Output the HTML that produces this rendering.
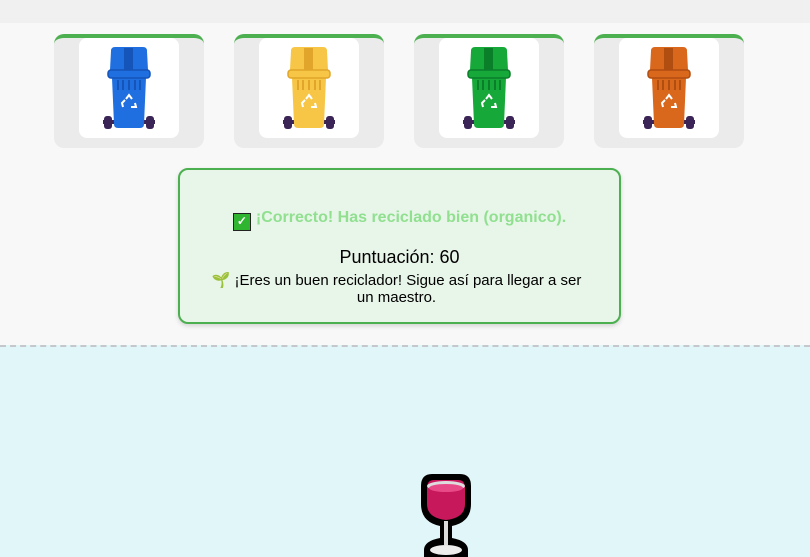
<!DOCTYPE html>
<html><head><meta charset="utf-8"><style>
*{margin:0;padding:0;box-sizing:border-box}
body{width:810px;height:557px;overflow:hidden;background:#f8f8f8;font-family:"Liberation Sans",Arial,sans-serif;position:relative}
.top{position:absolute;left:0;top:0;width:810px;height:23px;background:#f0f0f0}
.card{position:absolute;top:34px;width:150px;height:114px;background:#ebebeb;border-radius:10px;border-top:4px solid #4caf50}
.inner{position:absolute;left:25px;top:0px;width:100px;height:100px;background:#fff;border-radius:8px}
.fb{position:absolute;left:178px;top:168px;width:443px;height:156px;background:#e8f5e9;border:2px solid #4caf50;border-radius:10px;box-shadow:0 2px 5px rgba(0,0,0,.15);text-align:center}
.l1{position:absolute;top:39px;width:100%;font-size:16px;font-weight:bold;color:#90e090}
.l2{position:absolute;top:77px;width:100%;font-size:18px;color:#000}
.l3{position:absolute;top:102px;left:22px;right:28px;font-size:15px;line-height:17px;color:#000}
.bottom{position:absolute;left:0;top:345px;width:810px;height:212px;background:#e0f6f9;border-top:2px dashed #c4c8cc}
.ck{display:inline-block;width:18px;height:18px;background:#2fb52f;border:1.5px solid #222;vertical-align:-3px;color:#fff;font-size:12px;line-height:15px;margin-right:5px}
</style></head><body>
<div class="top"></div>
<svg width="0" height="0" style="position:absolute"><defs>
<g id="bin">
<rect x="25" y="78" width="8" height="13" rx="3" fill="#3b2456"/>
<rect x="67" y="78" width="8" height="13" rx="3" fill="#3b2456"/>
<rect x="24" y="82" width="52" height="4" fill="#3b2456"/>
<path d="M33 40 L67 40 L65 86 Q65 90 61 90 L39 90 Q35 90 35 86 Z" fill="var(--c)"/>
<path d="M32 13 Q32 9 36 9 L64 9 Q68 9 68 13 L69 32 L31 32 Z" fill="var(--c)"/>
<rect x="45" y="10" width="9" height="22" fill="var(--d)"/>
<rect x="29" y="32" width="42" height="8" rx="3" fill="var(--c)" stroke="var(--d)" stroke-width="1.5"/>
<g stroke="var(--d)" stroke-width="2"><line x1="39" y1="42" x2="39" y2="52"/><line x1="44" y1="42" x2="44" y2="52"/><line x1="50" y1="42" x2="50" y2="52"/><line x1="56" y1="42" x2="56" y2="52"/><line x1="61" y1="42" x2="61" y2="52"/></g>
<path d="M47 61 L50 57 L53 61 M56 65 L57 69 L52 69 M44 69 L43 65 L46 62" stroke="#fff" stroke-width="2" fill="none"/>
</g></defs></svg>
<div class="card" style="left:54px"><div class="inner"><svg viewBox="0 0 100 100" width="100" height="100" style="--c:#1f6fe0;--d:#1554b8"><use href="#bin"/></svg></div></div>
<div class="card" style="left:234px"><div class="inner"><svg viewBox="0 0 100 100" width="100" height="100" style="--c:#f7c646;--d:#e0a52a"><use href="#bin"/></svg></div></div>
<div class="card" style="left:414px"><div class="inner"><svg viewBox="0 0 100 100" width="100" height="100" style="--c:#17a83a;--d:#0b7e2a"><use href="#bin"/></svg></div></div>
<div class="card" style="left:594px"><div class="inner"><svg viewBox="0 0 100 100" width="100" height="100" style="--c:#d9671c;--d:#b04d10"><use href="#bin"/></svg></div></div>
<div class="fb">
<div class="l1"><span class="ck">✓</span>¡Correcto! Has reciclado bien (organico).</div>
<div class="l2">Puntuación: 60</div>
<div class="l3">🌱 ¡Eres un buen reciclador! Sigue así para llegar a ser un maestro.</div>
</div>
<div class="bottom"></div>
<svg style="position:absolute;left:418px;top:472px" width="56" height="85" viewBox="0 0 56 85">
<path d="M3 14 Q3 2 14 2 L42 2 Q53 2 53 14 L53 32 Q53 50 34 54 L34 66 Q50 69 50 78 L50 85 L6 85 L6 78 Q6 69 22 66 L22 54 Q3 50 3 32 Z" fill="#000"/>
<path d="M9 16 Q9 8 16 8 L40 8 Q47 8 47 16 L47 32 Q47 46 28 48 Q9 46 9 32 Z" fill="#c7185c"/>
<ellipse cx="28" cy="14" rx="19" ry="5" fill="#ddd"/>
<ellipse cx="28" cy="16" rx="17" ry="4" fill="#e84a88"/>
<rect x="26" y="49" width="4" height="24" fill="#ddd"/>
<ellipse cx="28" cy="78" rx="16" ry="5" fill="#eee"/>
</svg>
</body></html>
